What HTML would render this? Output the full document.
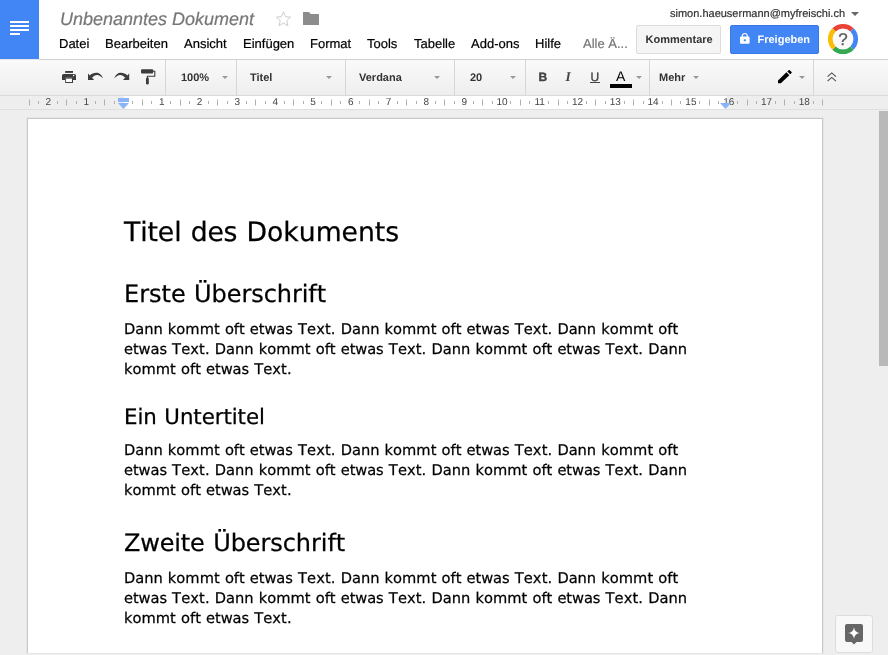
<!DOCTYPE html>
<html lang="de"><head><meta charset="utf-8"><title>Unbenanntes Dokument</title>
<style>
*{box-sizing:border-box;margin:0;padding:0}
html,body{text-rendering:geometricPrecision;width:888px;height:655px;overflow:hidden;background:#eee;font-family:"Liberation Sans",Arial,sans-serif;color:#000}
svg{position:absolute;display:block;overflow:visible}
#hdr{position:absolute;left:0;top:0;width:888px;height:60px;background:#fff}
#hline{position:absolute;left:39px;top:59px;width:849px;height:1px;background:#d2d2d2}
#logo{position:absolute;left:0;top:0;width:39px;height:59px;background:#4285f4;box-shadow:0 1px 0 #e6e6e6}
#logo i{position:absolute;left:10px;height:2px;background:#fff;width:19px}
#title{-webkit-text-stroke:0.2px #777;position:absolute;left:60px;top:9px;font-size:18px;font-style:italic;color:#777;white-space:nowrap;line-height:21px}
#menu{-webkit-text-stroke:0.2px;position:absolute;left:59px;top:36px;font-size:13px;line-height:16px;white-space:nowrap}
#menu span{position:absolute;top:0}
#user{position:absolute;left:670px;top:7px;-webkit-text-stroke:0.2px #333;font-size:11px;color:#333;white-space:nowrap;line-height:14px}
#ucar{position:absolute;left:851px;top:12px;width:0;height:0;border-left:4px solid transparent;border-right:4px solid transparent;border-top:4px solid #666}
.btn{position:absolute;top:25px;height:29px;border-radius:2px;font-size:11px;font-weight:bold;line-height:29px;white-space:nowrap;overflow:hidden}
#bk{left:636px;width:85px;background:#f5f5f5;border:1px solid #dcdcdc;color:#333;padding-left:8.500px}
#bf{left:730px;width:89px;background:#4285f4;border:1px solid #3b78e7;color:#fff;padding-left:26.500px}
#help{position:absolute;left:828px;top:24px;width:30px;height:30px}
#q{position:absolute;left:828px;top:29.500px;width:30px;text-align:center;font-size:17px;line-height:20px;color:#5a5a5a;-webkit-text-stroke:0.300px #5a5a5a}
#tb{position:absolute;left:0;top:60px;width:888px;height:35px;background:linear-gradient(#fafafa,#eeeeee)}
#tbl{position:absolute;left:0;top:95px;width:888px;height:1px;background:#dadada}
.sep{position:absolute;top:0;width:1px;height:35px;background:#d6d6d6}
.tbt{position:absolute;top:11px;font-size:11px;font-weight:bold;color:#333;line-height:14px;white-space:nowrap}
.car{position:absolute;top:16px;width:0;height:0;border-left:3px solid transparent;border-right:3px solid transparent;border-top:3px solid #999}
#ruler{position:absolute;left:0;top:96px;width:888px;height:13px;background:#eee}
#rwhite{position:absolute;left:124px;top:0;width:603px;height:13px;background:#fff}
#ruler b{position:absolute;top:1px;width:20px;text-align:center;font-size:10px;font-weight:normal;line-height:12px;color:#444}
#rline{position:absolute;left:0;top:109px;width:888px;height:1px;background:#dfdfdf}
#page{position:absolute;left:27px;top:118px;width:796px;height:535px;background:#fff;border:1px solid #c8c8c8;border-bottom:none;box-shadow:0 0 0 1px #e6e6e6}
.doc{font-kerning:none;-webkit-text-stroke:0.25px #000;font-family:"DejaVu Sans",Verdana,sans-serif;position:absolute;left:124px;white-space:nowrap;color:#000}
.doc span{position:absolute;top:0;white-space:pre}
#sb{position:absolute;left:879px;top:111px;width:9px;height:255px;background:#b9b9b9}
#exp{position:absolute;left:835px;top:615px;width:38px;height:38px;background:#f8f8f8;border:1px solid #dcdcdc;border-radius:3px}
#hdr,#tb,#ruler,#doc{will-change:transform}
#doc{position:absolute;left:0;top:0;width:888px;height:655px}
</style></head><body>
<div id="hdr">
 <div id="logo"><i style="top:21px"></i><i style="top:25px"></i><i style="top:29px"></i><i style="top:33px;width:10px"></i></div>
 <div id="title">Unbenanntes Dokument</div>
 <svg style="left:275px;top:9.500px" width="17" height="17.500" viewBox="0 0 24 24" preserveAspectRatio="none"><path d="M12 2.5l2.9 6.6 7.1.7-5.4 4.8 1.6 7-6.2-3.7-6.2 3.7 1.6-7L2 9.800l7.100-.7z" fill="none" stroke="#c8c8c8" stroke-width="1.3" stroke-linejoin="miter"/></svg>
 <svg style="left:303px;top:12px" width="16" height="13" viewBox="0 0 16 13"><path d="M0 .6Q0 0 .6 0H6l1.800 2H15.400q.6 0 .6.600V12.400q0 .6-.6.600H.6Q0 13 0 12.400z" fill="#8c8c8c"/></svg>
 <div id="menu"><span style="left:0">Datei</span><span style="left:46px">Bearbeiten</span><span style="left:125px">Ansicht</span><span style="left:184px">Einfügen</span><span style="left:251px">Format</span><span style="left:308px">Tools</span><span style="left:355px">Tabelle</span><span style="left:412px">Add-ons</span><span style="left:476px">Hilfe</span><span style="left:524px;color:#777">Alle Ä...</span></div>
 <div id="user">simon.haeusermann@myfreischi.ch</div><div id="ucar"></div>
 <div class="btn" id="bk">Kommentare</div>
 <div class="btn" id="bf">Freigeben</div>
 <svg style="left:739.500px;top:33.200px" width="9.600" height="10.800" viewBox="4 1 16 21" preserveAspectRatio="none"><path fill="#fff" d="M18 8h-1V6c0-2.760-2.240-5-5-5S7 3.240 7 6v2H6c-1.100 0-2 .9-2 2v10c0 1.100.9 2 2 2h12c1.100 0 2-.9 2-2V10c0-1.100-.9-2-2-2zm-6 9c-1.100 0-2-.9-2-2s.9-2 2-2 2 .9 2 2-.9 2-2 2zm3.100-9H8.900V6c0-1.710 1.390-3.100 3.100-3.100 1.710 0 3.100 1.390 3.100 3.100v2z"/></svg>
 <svg id="help" viewBox="-15 -15 30 30"><circle r="12.700" fill="#fafafa"/>
  <g fill="none" stroke-width="4.600">
  <path d="M-9.020 -9.020A12.750 12.750 0 0 1 9.020 -9.020" stroke="#ea4335"/>
  <path d="M9.020 -9.020A12.750 12.750 0 0 1 9.020 9.020" stroke="#4285f4"/>
  <path d="M9.020 9.020A12.750 12.750 0 0 1 -9.020 9.020" stroke="#34a853"/>
  <path d="M-9.020 9.020A12.750 12.750 0 0 1 -9.020 -9.020" stroke="#fbbc05"/></g></svg>
 <div id="q">?</div>
 <div id="hline"></div>
</div>
<div id="tb">
 <i class="sep" style="left:165px"></i><i class="sep" style="left:236px"></i><i class="sep" style="left:345px"></i><i class="sep" style="left:454px"></i><i class="sep" style="left:525px"></i><i class="sep" style="left:649px"></i><i class="sep" style="left:813px"></i>
 <svg style="left:0;top:0" width="888" height="35" viewBox="0 60 888 35"><g fill="#3c3c3c">
  <rect x="65.200" y="71" width="7.800" height="1.900"/>
  <path d="M62 75.600Q62 74 63.600 74H74.400Q76 74 76 75.600V80H73V77.800H65.200V80H62z"/>
  <path d="M65.200 77.800H73V83H65.200zM66.200 78.800V82H72V78.800z" fill-rule="evenodd"/>
  <path d="M88 73.600V79.900H94.200zM89.800 75.400C92.500 72.600 97.500 71.800 100 74C101.500 75.300 102.500 76.800 103 78.400C101.500 76.800 100 75.800 98.500 75.200C96.500 74.400 94 75.200 92.200 77.800z"/>
  <path d="M129.2 73.6 V79.9 H123 zM127.4 75.4 C124.7 72.6 119.7 71.8 117.2 74 C115.7 75.3 114.7 76.8 114.2 78.4 C115.7 76.8 117.2 75.8 118.7 75.2 C120.7 74.4 123.2 75.2 125 77.8 z"/>
  <rect x="141" y="69.200" width="12.200" height="4.300" rx="1.100"/>
  <rect x="146" y="77.600" width="2.800" height="7" rx="1.300"/>
  <path d="M153 71.300H154.800V76.300H147.400V78" fill="none" stroke="#3c3c3c" stroke-width="1.100"/>
 </g><rect x="66.200" y="78.800" width="5.800" height="3.200" fill="#fff"/><circle cx="73.600" cy="75.500" r=".75" fill="#fff"/></svg>
 <div class="tbt" style="left:181px">100%</div><i class="car" style="left:222px"></i>
 <div class="tbt" style="left:250px">Titel</div><i class="car" style="left:326px"></i>
 <div class="tbt" style="left:359px">Verdana</div><i class="car" style="left:434px"></i>
 <div class="tbt" style="left:470px">20</div><i class="car" style="left:510px"></i>
 <div class="tbt" style="left:538.500px;top:10px;font-size:12px;line-height:14px;color:#444;-webkit-text-stroke:0.4px #444">B</div>
 <div class="tbt" style="left:565.500px;top:9px;font-family:'Liberation Serif',serif;font-size:13.500px;font-weight:bold;line-height:16px;color:#444;font-style:italic;letter-spacing:0">I</div>
 <div class="tbt" style="left:590.500px;top:10px;font-size:12px;line-height:14px;font-weight:normal;color:#444;-webkit-text-stroke:0.350px #444">U</div><i style="position:absolute;left:590px;top:22px;width:10px;height:1px;background:#444"></i>
 <div class="tbt" style="left:616px;top:8px;font-size:14px;font-weight:normal;color:#000;line-height:16px">A</div>
 <i style="position:absolute;left:610px;top:24px;width:22px;height:4px;background:#000"></i><i class="car" style="left:636px"></i>
 <div class="tbt" style="left:659px">Mehr</div><i class="car" style="left:693px"></i>
 <svg style="left:777.500px;top:9.700px" width="13.800" height="13.300" viewBox="3 3 18 18" preserveAspectRatio="none"><path fill="#000" d="M3 17.250V21h3.750L17.810 9.940l-3.750-3.750L3 17.250zM20.710 7.040c.39-.39.39-1.020 0-1.410l-2.340-2.340c-.39-.39-1.020-.39-1.410 0l-1.830 1.830 3.750 3.750 1.830-1.830z"/></svg>
 <i class="car" style="left:799px"></i>
 <svg style="left:826.500px;top:11.700px" width="9.500" height="10" viewBox="0 0 10 10"><path d="M.6 4.700L5 .7 9.400 4.700M.6 9.400L5 5.400 9.400 9.400" fill="none" stroke="#505050" stroke-width="1.150"/></svg>
</div>
<div id="tbl"></div>
<div id="ruler"><div id="rwhite"></div><!--RULER--><svg style="left:0;top:0" width="888" height="13" viewBox="0 0 888 13"><path d="M29.5 3.500V9.500M66.5 3.500V9.500M104.5 3.500V9.500M142.5 3.500V9.500M180.5 3.500V9.500M217.5 3.500V9.500M255.5 3.500V9.500M293.5 3.500V9.500M331.5 3.500V9.500M369.5 3.500V9.500M406.5 3.500V9.500M444.5 3.500V9.500M482.5 3.500V9.500M520.5 3.500V9.500M558.5 3.500V9.500M595.5 3.500V9.500M633.5 3.500V9.500M671.5 3.500V9.500M709.5 3.500V9.500M747.5 3.500V9.500M784.5 3.500V9.500M822.5 3.500V9.500M38.5 5V8M57.5 5V8M76.5 5V8M95.5 5V8M114.5 5V8M132.5 5V8M151.5 5V8M170.5 5V8M189.5 5V8M208.5 5V8M227.5 5V8M246.5 5V8M265.5 5V8M284.5 5V8M303.5 5V8M321.5 5V8M340.5 5V8M359.5 5V8M378.5 5V8M397.5 5V8M416.5 5V8M435.5 5V8M454.5 5V8M473.5 5V8M492.5 5V8M510.5 5V8M529.5 5V8M548.5 5V8M567.5 5V8M586.5 5V8M605.5 5V8M624.5 5V8M643.5 5V8M662.5 5V8M680.5 5V8M699.5 5V8M718.5 5V8M737.5 5V8M756.5 5V8M775.5 5V8M794.5 5V8M813.5 5V8" stroke="#b0b0b0" stroke-width="1" fill="none"/></svg><b style="left:38.4px">2</b><b style="left:76.2px">1</b><b style="left:151.8px">1</b><b style="left:189.6px">2</b><b style="left:227.4px">3</b><b style="left:265.2px">4</b><b style="left:303.0px">5</b><b style="left:340.8px">6</b><b style="left:378.6px">7</b><b style="left:416.4px">8</b><b style="left:454.2px">9</b><b style="left:492.0px">10</b><b style="left:529.7px">11</b><b style="left:567.5px">12</b><b style="left:605.3px">13</b><b style="left:643.1px">14</b><b style="left:680.9px">15</b><b style="left:718.7px">16</b><b style="left:756.5px">17</b><b style="left:794.3px">18</b><i style="position:absolute;left:118px;top:2px;width:11px;height:4px;background:#8ab4f8"></i><svg style="left:118px;top:7px" width="11" height="6" viewBox="0 0 11 6"><path d="M0 0H11L5.500 6z" fill="#8ab4f8"/></svg><svg style="left:720px;top:7px" width="11" height="6" viewBox="0 0 11 6"><path d="M0 0H11L5.500 6z" fill="#8ab4f8"/></svg></div>
<div id="rline"></div>
<div id="page"></div>
<div id="doc"><!--DOC-->
<div class="doc" style="top:212.77px;font-size:26.667px;line-height:40px;height:40px"><span style="left:0.00px;letter-spacing:-0.099px">Titel </span><span style="left:66.84px;letter-spacing:-0.275px">des </span><span style="left:122.60px;letter-spacing:-0.033px">Dokuments</span></div>
<div class="doc" style="top:275.70px;font-size:24px;line-height:36px;height:36px"><span style="left:0.00px;letter-spacing:-0.009px">Erste </span><span style="left:70.11px;letter-spacing:-0.070px">Überschrift</span></div>
<div class="doc" style="top:318.93px;font-size:14.667px;line-height:22px;height:22px"><span style="left:0.00px;letter-spacing:-0.047px">Dann </span><span style="left:43.83px;letter-spacing:0.026px">kommt </span><span style="left:100.88px;letter-spacing:-0.013px">oft </span><span style="left:125.87px;letter-spacing:-0.082px">etwas </span><span style="left:173.99px;letter-spacing:0.101px">Text. </span><span style="left:216.72px;letter-spacing:-0.047px">Dann </span><span style="left:260.55px;letter-spacing:0.026px">kommt </span><span style="left:317.60px;letter-spacing:-0.013px">oft </span><span style="left:342.59px;letter-spacing:-0.082px">etwas </span><span style="left:390.71px;letter-spacing:0.101px">Text. </span><span style="left:433.44px;letter-spacing:-0.047px">Dann </span><span style="left:477.27px;letter-spacing:0.026px">kommt </span><span style="left:534.32px;letter-spacing:-0.013px">oft</span></div>
<div class="doc" style="top:338.93px;font-size:14.667px;line-height:22px;height:22px"><span style="left:0.00px;letter-spacing:-0.082px">etwas </span><span style="left:48.12px;letter-spacing:0.101px">Text. </span><span style="left:90.85px;letter-spacing:-0.047px">Dann </span><span style="left:134.68px;letter-spacing:0.026px">kommt </span><span style="left:191.73px;letter-spacing:-0.013px">oft </span><span style="left:216.72px;letter-spacing:-0.082px">etwas </span><span style="left:264.84px;letter-spacing:0.101px">Text. </span><span style="left:307.57px;letter-spacing:-0.047px">Dann </span><span style="left:351.39px;letter-spacing:0.026px">kommt </span><span style="left:408.45px;letter-spacing:-0.013px">oft </span><span style="left:433.44px;letter-spacing:-0.082px">etwas </span><span style="left:481.56px;letter-spacing:0.101px">Text. </span><span style="left:524.29px;letter-spacing:-0.047px">Dann</span></div>
<div class="doc" style="top:358.93px;font-size:14.667px;line-height:22px;height:22px"><span style="left:0.00px;letter-spacing:0.026px">kommt </span><span style="left:57.05px;letter-spacing:-0.013px">oft </span><span style="left:82.04px;letter-spacing:-0.082px">etwas </span><span style="left:130.16px;letter-spacing:0.101px">Text.</span></div>
<div class="doc" style="top:401.62px;font-size:21.333px;line-height:32px;height:32px"><span style="left:0.00px;letter-spacing:-0.027px">Ein </span><span style="left:40.34px;letter-spacing:-0.054px">Untertitel</span></div>
<div class="doc" style="top:439.93px;font-size:14.667px;line-height:22px;height:22px"><span style="left:0.00px;letter-spacing:-0.047px">Dann </span><span style="left:43.83px;letter-spacing:0.026px">kommt </span><span style="left:100.88px;letter-spacing:-0.013px">oft </span><span style="left:125.87px;letter-spacing:-0.082px">etwas </span><span style="left:173.99px;letter-spacing:0.101px">Text. </span><span style="left:216.72px;letter-spacing:-0.047px">Dann </span><span style="left:260.55px;letter-spacing:0.026px">kommt </span><span style="left:317.60px;letter-spacing:-0.013px">oft </span><span style="left:342.59px;letter-spacing:-0.082px">etwas </span><span style="left:390.71px;letter-spacing:0.101px">Text. </span><span style="left:433.44px;letter-spacing:-0.047px">Dann </span><span style="left:477.27px;letter-spacing:0.026px">kommt </span><span style="left:534.32px;letter-spacing:-0.013px">oft</span></div>
<div class="doc" style="top:459.93px;font-size:14.667px;line-height:22px;height:22px"><span style="left:0.00px;letter-spacing:-0.082px">etwas </span><span style="left:48.12px;letter-spacing:0.101px">Text. </span><span style="left:90.85px;letter-spacing:-0.047px">Dann </span><span style="left:134.68px;letter-spacing:0.026px">kommt </span><span style="left:191.73px;letter-spacing:-0.013px">oft </span><span style="left:216.72px;letter-spacing:-0.082px">etwas </span><span style="left:264.84px;letter-spacing:0.101px">Text. </span><span style="left:307.57px;letter-spacing:-0.047px">Dann </span><span style="left:351.39px;letter-spacing:0.026px">kommt </span><span style="left:408.45px;letter-spacing:-0.013px">oft </span><span style="left:433.44px;letter-spacing:-0.082px">etwas </span><span style="left:481.56px;letter-spacing:0.101px">Text. </span><span style="left:524.29px;letter-spacing:-0.047px">Dann</span></div>
<div class="doc" style="top:479.93px;font-size:14.667px;line-height:22px;height:22px"><span style="left:0.00px;letter-spacing:0.026px">kommt </span><span style="left:57.05px;letter-spacing:-0.013px">oft </span><span style="left:82.04px;letter-spacing:-0.082px">etwas </span><span style="left:130.16px;letter-spacing:0.101px">Text.</span></div>
<div class="doc" style="top:524.70px;font-size:24px;line-height:36px;height:36px"><span style="left:0.00px;letter-spacing:-0.163px">Zweite </span><span style="left:89.15px;letter-spacing:-0.070px">Überschrift</span></div>
<div class="doc" style="top:567.93px;font-size:14.667px;line-height:22px;height:22px"><span style="left:0.00px;letter-spacing:-0.047px">Dann </span><span style="left:43.83px;letter-spacing:0.026px">kommt </span><span style="left:100.88px;letter-spacing:-0.013px">oft </span><span style="left:125.87px;letter-spacing:-0.082px">etwas </span><span style="left:173.99px;letter-spacing:0.101px">Text. </span><span style="left:216.72px;letter-spacing:-0.047px">Dann </span><span style="left:260.55px;letter-spacing:0.026px">kommt </span><span style="left:317.60px;letter-spacing:-0.013px">oft </span><span style="left:342.59px;letter-spacing:-0.082px">etwas </span><span style="left:390.71px;letter-spacing:0.101px">Text. </span><span style="left:433.44px;letter-spacing:-0.047px">Dann </span><span style="left:477.27px;letter-spacing:0.026px">kommt </span><span style="left:534.32px;letter-spacing:-0.013px">oft</span></div>
<div class="doc" style="top:587.93px;font-size:14.667px;line-height:22px;height:22px"><span style="left:0.00px;letter-spacing:-0.082px">etwas </span><span style="left:48.12px;letter-spacing:0.101px">Text. </span><span style="left:90.85px;letter-spacing:-0.047px">Dann </span><span style="left:134.68px;letter-spacing:0.026px">kommt </span><span style="left:191.73px;letter-spacing:-0.013px">oft </span><span style="left:216.72px;letter-spacing:-0.082px">etwas </span><span style="left:264.84px;letter-spacing:0.101px">Text. </span><span style="left:307.57px;letter-spacing:-0.047px">Dann </span><span style="left:351.39px;letter-spacing:0.026px">kommt </span><span style="left:408.45px;letter-spacing:-0.013px">oft </span><span style="left:433.44px;letter-spacing:-0.082px">etwas </span><span style="left:481.56px;letter-spacing:0.101px">Text. </span><span style="left:524.29px;letter-spacing:-0.047px">Dann</span></div>
<div class="doc" style="top:607.93px;font-size:14.667px;line-height:22px;height:22px"><span style="left:0.00px;letter-spacing:0.026px">kommt </span><span style="left:57.05px;letter-spacing:-0.013px">oft </span><span style="left:82.04px;letter-spacing:-0.082px">etwas </span><span style="left:130.16px;letter-spacing:0.101px">Text.</span></div>
<!--/DOC--></div>
<div id="sb"></div>
<div id="exp"><svg style="left:9px;top:8px" width="18" height="21" viewBox="0 0 18 21"><path fill="#666" d="M2 0h14q2 0 2 2v14q0 2-2 2h-4.500L9 20.500 6.500 18H2q-2 0-2-2V2q0-2 2-2z"/><path fill="#fff" d="M9 3.200Q9.700 8.300 14.800 9 9.700 9.700 9 14.800 8.300 9.700 3.200 9 8.300 8.300 9 3.200z"/></svg></div>
</body></html>
